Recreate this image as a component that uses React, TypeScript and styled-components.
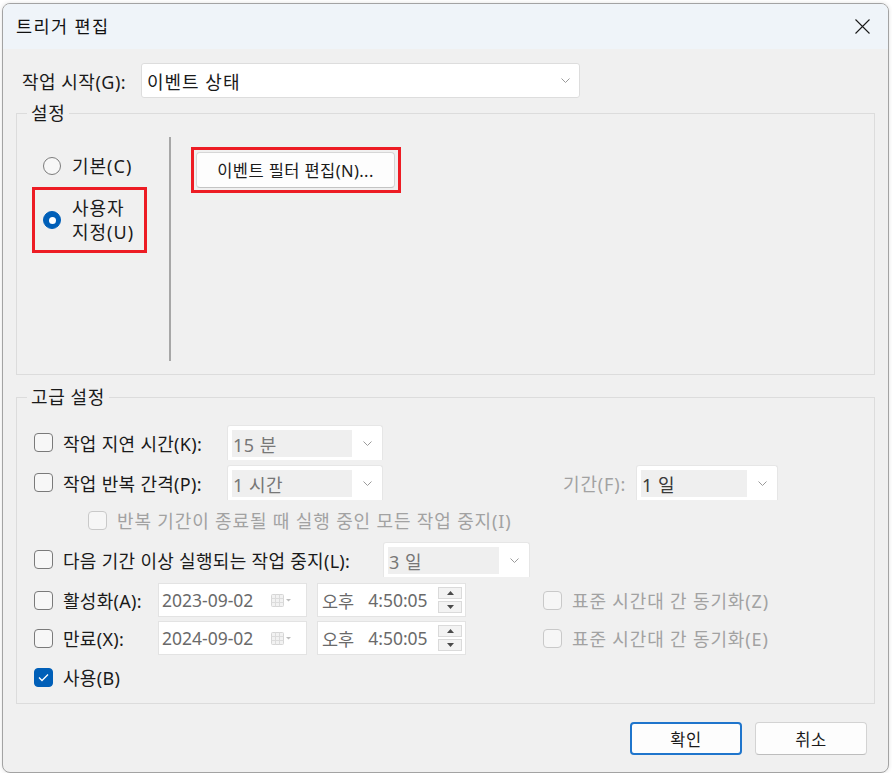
import styled, { createGlobalStyle, css } from "styled-components"

const GlobalStyle = createGlobalStyle`
    html, body {
        margin: 0;
        padding: 0;
        background: #ffffff;
    }
    body {
        font-family: "Noto Sans", "Noto Sans CJK KR", sans-serif;
        color: #1a1a1a;
    }
    * {
        box-sizing: border-box;
    }
`

function Chevron() {
    return (
        <svg width="9" height="5" viewBox="0 0 9 5">
            <polyline
                points="0.5,0.5 4.5,4.5 8.5,0.5"
                fill="none"
                stroke="#9a9a9a"
                strokeWidth="1"
            />
        </svg>
    )
}

function CloseIcon() {
    return (
        <svg width="15" height="15" viewBox="0 0 15 15">
            <path d="M0.5 0.5 L14.5 14.5 M14.5 0.5 L0.5 14.5" stroke="#1a1a1a" strokeWidth="1.1" />
        </svg>
    )
}

function CheckMark() {
    return (
        <svg width="11" height="9" viewBox="0 0 11 9">
            <polyline
                points="1,4.5 4,7.5 10,1.5"
                fill="none"
                stroke="#ffffff"
                strokeWidth="1.3"
            />
        </svg>
    )
}

function CalendarGlyph() {
    return (
        <svg width="21" height="13" viewBox="0 0 21 13">
            <rect x="0.5" y="0.5" width="12" height="12" rx="1" fill="#f2f2f2" stroke="#d6d6d6" />
            <path
                d="M0.5 4.5 H12.5 M0.5 8.5 H12.5 M4.5 0.5 V12.5 M8.5 0.5 V12.5"
                stroke="#dcdcdc"
                strokeWidth="1"
            />
            <polygon points="15,5 20,5 17.5,7.5" fill="#bcbcbc" />
        </svg>
    )
}

function Arrow({ up }: { up?: boolean }) {
    return (
        <svg width="7" height="4" viewBox="0 0 7 4">
            <polygon points={up ? "0,4 7,4 3.5,0" : "0,0 7,0 3.5,4"} fill="#4a4a4a" />
        </svg>
    )
}

function DateTimeRow({
    label,
    date,
    sync,
    top,
}: {
    label: string
    date: string
    sync: string
    top: number
}) {
    return (
        <Row $height={34} $top={top}>
            <CheckBox />
            <RowLabel $width={95}>{label}</RowLabel>
            <DateBox>
                <BoxText>{date}</BoxText>
                <CalendarGlyph />
            </DateBox>
            <TimeBox>
                <BoxText>오후</BoxText>
                <TimeText>4:50:05</TimeText>
                <Spinner>
                    <SpinButton>
                        <Arrow up />
                    </SpinButton>
                    <SpinButton>
                        <Arrow />
                    </SpinButton>
                </Spinner>
            </TimeBox>
            <CheckBox $disabled $offset={77} />
            <RowLabel $disabled>{sync}</RowLabel>
        </Row>
    )
}

export default function App() {
    return (
        <>
            <GlobalStyle />
            <Window>
                <TitleBar>
                    <Title>트리거 편집</Title>
                    <CloseButton>
                        <CloseIcon />
                    </CloseButton>
                </TitleBar>
                <Body>
                    <StartRow>
                        <FieldLabel>작업 시작(G):</FieldLabel>
                        <Select>
                            <SelectText>이벤트 상태</SelectText>
                            <Chevron />
                        </Select>
                    </StartRow>

                    <Group $top={5}>
                        <Legend>설정</Legend>
                        <SettingsContent>
                            <OptionColumn>
                                <RadioOption>
                                    <Radio />
                                    <OptionText>기본(C)</OptionText>
                                </RadioOption>
                                <RadioOption $boxed>
                                    <Radio $checked />
                                    <OptionText>
                                        사용자
                                        <br />
                                        지정(U)
                                    </OptionText>
                                </RadioOption>
                            </OptionColumn>
                            <Divider />
                            <Highlight>
                                <PushButton>이벤트 필터 편집(N)...</PushButton>
                            </Highlight>
                        </SettingsContent>
                    </Group>

                    <Group $top={12}>
                        <Legend>고급 설정</Legend>
                        <AdvancedContent>
                            <Row $height={35} $top={0}>
                                <CheckBox />
                                <RowLabel $width={164}>작업 지연 시간(K):</RowLabel>
                                <DisabledSelect $width={156}>
                                    <DisabledField>15 분</DisabledField>
                                    <Chevron />
                                </DisabledSelect>
                            </Row>
                            <Row $height={35} $top={5}>
                                <CheckBox />
                                <RowLabel $width={164}>작업 반복 간격(P):</RowLabel>
                                <DisabledSelect $width={156}>
                                    <DisabledField>1 시간</DisabledField>
                                    <Chevron />
                                </DisabledSelect>
                                <RowLabel $width={73} $offset={180} $disabled>
                                    기간(F):
                                </RowLabel>
                                <DisabledSelect $width={142}>
                                    <DisabledField $dark>1 일</DisabledField>
                                    <Chevron />
                                </DisabledSelect>
                            </Row>
                            <Row $height={30} $top={5} $indent={54}>
                                <CheckBox $disabled />
                                <RowLabel $disabled>
                                    반복 기간이 종료될 때 실행 중인 모든 작업 중지(I)
                                </RowLabel>
                            </Row>
                            <Row $height={35} $top={7}>
                                <CheckBox />
                                <RowLabel $width={320}>
                                    다음 기간 이상 실행되는 작업 중지(L):
                                </RowLabel>
                                <DisabledSelect $width={147}>
                                    <DisabledField>3 일</DisabledField>
                                    <Chevron />
                                </DisabledSelect>
                            </Row>
                            <DateTimeRow
                                top={6}
                                label="활성화(A):"
                                date="2023-09-02"
                                sync="표준 시간대 간 동기화(Z)"
                            />
                            <DateTimeRow
                                top={4}
                                label="만료(X):"
                                date="2024-09-02"
                                sync="표준 시간대 간 동기화(E)"
                            />
                            <Row $height={28} $top={8}>
                                <CheckBox $checked>
                                    <CheckMark />
                                </CheckBox>
                                <RowLabel>사용(B)</RowLabel>
                            </Row>
                        </AdvancedContent>
                    </Group>

                    <Footer>
                        <DialogButton $primary>확인</DialogButton>
                        <DialogButton>취소</DialogButton>
                    </Footer>
                </Body>
            </Window>
        </>
    )
}

const Window = styled.div`
    margin: 3px 0 0 2px;
    width: 887px;
    height: 770px;
    border: 1px solid #a3a3a3;
    border-radius: 8px;
    background: #f0f0f0;
    overflow: hidden;
    display: flex;
    flex-direction: column;
    box-shadow: 0 0 4px rgba(0, 0, 0, 0.12);
`

const TitleBar = styled.div`
    display: flex;
    align-items: center;
    justify-content: space-between;
    height: 45px;
    padding-left: 13px;
    background: #eff4f9;
`

const Title = styled.span`
    font-size: 17.5px;
    letter-spacing: 1.4px;
    color: #111111;
    line-height: 24px;
    margin-top: -2px;
`

const CloseButton = styled.div`
    display: flex;
    align-items: center;
    justify-content: center;
    width: 52px;
    height: 45px;
`

const Body = styled.div`
    display: flex;
    flex-direction: column;
    padding: 14px 13px 0 13px;
`

const StartRow = styled.div`
    display: flex;
    align-items: center;
    height: 35px;
    padding-left: 6px;
`

const FieldLabel = styled.span`
    width: 119px;
    font-size: 18px;
    letter-spacing: 0.5px;
    color: #1a1a1a;
`

const Select = styled.div`
    display: flex;
    align-items: center;
    justify-content: space-between;
    width: 439px;
    height: 35px;
    padding: 0 9px 0 5px;
    background: #ffffff;
    border: 1px solid #dddddd;
    border-radius: 3px;
`

const SelectText = styled.span`
    font-size: 18px;
    letter-spacing: 1px;
    color: #1a1a1a;
`

const Group = styled.fieldset<{ $top: number }>`
    margin: ${(p) => p.$top}px 0 0 0;
    padding: 0;
    min-width: 0;
    border: 1px solid #dcdcdc;
`

const Legend = styled.legend`
    margin-left: 10px;
    padding: 0 4px;
    font-size: 18px;
    letter-spacing: 0.6px;
    line-height: 20px;
    color: #1a1a1a;
`

const SettingsContent = styled.div`
    display: flex;
    align-items: flex-start;
    padding: 0 0 13px 15px;
`

const OptionColumn = styled.div`
    display: flex;
    flex-direction: column;
    gap: 7px;
    width: 115px;
    padding-top: 29px;
`

const RadioOption = styled.label<{ $boxed?: boolean }>`
    display: flex;
    align-items: center;
    gap: 11px;
    height: 28px;
    padding-left: 11px;

    ${(p) =>
        p.$boxed &&
        css`
            height: 66px;
            padding-left: 8px;
            border: 3px solid #ed1c24;
        `}
`

const Radio = styled.span<{ $checked?: boolean }>`
    position: relative;
    flex: none;
    width: 18px;
    height: 18px;
    border-radius: 50%;
    border: 1px solid #7c7c7c;
    background: #f7f7f7;

    ${(p) =>
        p.$checked &&
        css`
            border-color: #005fb8;
            background: #005fb8;

            &::after {
                content: "";
                position: absolute;
                left: 4.5px;
                top: 4.5px;
                width: 7px;
                height: 7px;
                border-radius: 50%;
                background: #ffffff;
            }
        `}
`

const OptionText = styled.span`
    font-size: 18px;
    letter-spacing: 1px;
    line-height: 24px;
    color: #1a1a1a;
`

const Divider = styled.div`
    flex: none;
    width: 2px;
    height: 224px;
    margin: 14px 0 0 22px;
    background: #a7a7a7;
`

const Highlight = styled.div`
    margin: 24px 0 0 20px;
    padding: 2px 3px 2px 2px;
    border: 3px solid #ed1c24;
`

const PushButton = styled.div`
    display: flex;
    align-items: center;
    justify-content: center;
    width: 199px;
    height: 36px;
    font-size: 16.5px;
    letter-spacing: 0.4px;
    color: #1a1a1a;
    background: #fdfdfd;
    border: 1px solid #d6d6d6;
    border-bottom-color: #c4c4c4;
    border-radius: 4px;
`

const AdvancedContent = styled.div`
    display: flex;
    flex-direction: column;
    padding: 18px 0 12px 17px;
`

const Row = styled.div<{ $height: number; $top: number; $indent?: number }>`
    display: flex;
    align-items: center;
    height: ${(p) => p.$height}px;
    margin-top: ${(p) => p.$top}px;
    padding-left: ${(p) => p.$indent ?? 0}px;
`

const CheckBox = styled.span<{ $checked?: boolean; $disabled?: boolean; $offset?: number }>`
    display: flex;
    align-items: center;
    justify-content: center;
    flex: none;
    width: 19px;
    height: 19px;
    margin-left: ${(p) => p.$offset ?? 0}px;
    margin-right: 10px;
    border-radius: 4px;
    border: 1px solid #7a7a7a;
    background: #f7f7f7;

    ${(p) =>
        p.$disabled &&
        css`
            border-color: #c9c9c9;
            background: #f6f6f6;
        `}

    ${(p) =>
        p.$checked &&
        css`
            border-color: #005fb8;
            background: #005fb8;
        `}
`

const RowLabel = styled.span<{ $width?: number; $offset?: number; $disabled?: boolean }>`
    flex: none;
    width: ${(p) => (p.$width ? `${p.$width}px` : "auto")};
    margin-left: ${(p) => p.$offset ?? 0}px;
    font-size: 18px;
    white-space: nowrap;
    letter-spacing: ${(p) => (p.$disabled ? "0.85px" : "0.3px")};
    color: ${(p) => (p.$disabled ? "#a2a2a2" : "#1a1a1a")};
`

const DisabledSelect = styled.div<{ $width: number }>`
    display: flex;
    align-items: center;
    gap: 11px;
    width: ${(p) => p.$width}px;
    height: 35px;
    padding: 4px 10px 3px 4px;
    background: #ffffff;
    border: 1px solid #e6e6e6;
    border-bottom: none;
    border-radius: 3px 3px 0 0;
`

const DisabledField = styled.span<{ $dark?: boolean }>`
    flex: 1;
    display: flex;
    align-items: center;
    height: 100%;
    padding-left: 1px;
    font-size: 18px;
    letter-spacing: 0.5px;
    background: #efefef;
    color: ${(p) => (p.$dark ? "#3a3a3a" : "#777777")};
`

const DateBox = styled.div`
    display: flex;
    align-items: center;
    justify-content: space-between;
    width: 149px;
    height: 34px;
    padding: 0 14px 0 3px;
    background: #ffffff;
    border: 1px solid #e3e3e3;
`

const BoxText = styled.span`
    font-size: 17.5px;
    color: #6a6a6a;
`

const TimeBox = styled.div`
    display: flex;
    align-items: center;
    width: 149px;
    height: 34px;
    margin-left: 10px;
    padding: 0 3px 0 4px;
    background: #ffffff;
    border: 1px solid #e3e3e3;
`

const TimeText = styled.span`
    flex: 1;
    margin-left: 14px;
    font-size: 17.5px;
    color: #6a6a6a;
`

const Spinner = styled.div`
    display: flex;
    flex-direction: column;
    gap: 2px;
`

const SpinButton = styled.span`
    display: flex;
    align-items: center;
    justify-content: center;
    width: 24px;
    height: 12px;
    background: #f3f3f3;
    border: 1px solid #dadada;
`

const Footer = styled.div`
    display: flex;
    justify-content: flex-end;
    gap: 13px;
    margin-top: 18px;
    padding-right: 8px;
`

const DialogButton = styled.div<{ $primary?: boolean }>`
    display: flex;
    align-items: center;
    justify-content: center;
    width: 112px;
    height: 33px;
    font-size: 16.5px;
    letter-spacing: 0.5px;
    color: #1a1a1a;
    background: #fdfdfd;
    border-radius: 4px;
    border: 1px solid #d3d3d3;
    border-bottom-color: #bdbdbd;

    ${(p) =>
        p.$primary &&
        css`
            border: 2px solid #1f75cc;
        `}
`
